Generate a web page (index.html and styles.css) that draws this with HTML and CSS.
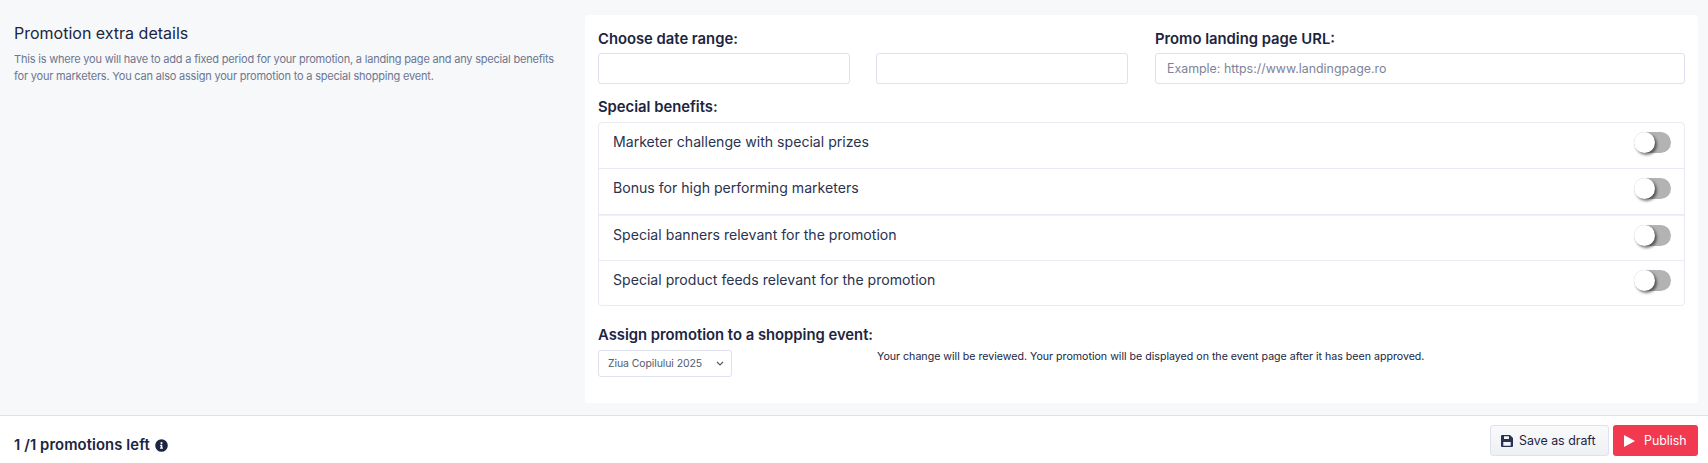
FILE: index.html
```html
<!DOCTYPE html>
<html lang="en">
<head>
<meta charset="utf-8">
<title>Promotion extra details</title>
<link rel="stylesheet" href="styles.css">
</head>
<body>
<main class="content">
  <section class="intro">
    <h2 class="intro-title">Promotion extra details</h2>
    <p class="intro-text">This is where you will have to add a fixed period for your promotion, a landing page and any special benefits for your marketers. You can also assign your promotion to a special shopping event.</p>
  </section>
  <section class="card">
    <div class="fields">
      <div class="field-date">
        <label class="label">Choose date range:</label>
        <div class="date-pair">
          <input class="input" type="text">
          <input class="input" type="text">
        </div>
      </div>
      <div class="field-url">
        <label class="label">Promo landing page URL:</label>
        <input class="input" type="text" placeholder="Example: https://www.landingpage.ro">
      </div>
    </div>
    <h3 class="label benefits-label">Special benefits:</h3>
    <ul class="benefits">
      <li class="benefit"><span class="benefit-text">Marketer challenge with special prizes</span><span class="toggle"></span></li>
      <li class="benefit"><span class="benefit-text">Bonus for high performing marketers</span><span class="toggle"></span></li>
      <li class="benefit benefit-thick"><span class="benefit-text">Special banners relevant for the promotion</span><span class="toggle"></span></li>
      <li class="benefit"><span class="benefit-text">Special product feeds relevant for the promotion</span><span class="toggle"></span></li>
    </ul>
    <h3 class="label event-label">Assign promotion to a shopping event:</h3>
    <div class="event-row">
      <select class="select"><option>Ziua Copilului 2025</option></select>
      <p class="event-note">Your change will be reviewed. Your promotion will be displayed on the event page after it has been approved.</p>
    </div>
  </section>
</main>
<footer class="footer">
  <div class="left-count">1 /1 promotions left
    <svg class="info" viewBox="0 0 512 512" width="13" height="13"><path fill="#1c2541" d="M256 8a248 248 0 1 0 0 496 248 248 0 0 0 0-496zm0 110a42 42 0 1 1 0 84 42 42 0 0 1 0-84zm56 254c0 7-5 12-12 12h-88c-7 0-12-5-12-12v-24c0-7 5-12 12-12h12v-64h-12c-7 0-12-5-12-12v-24c0-7 5-12 12-12h64c7 0 12 5 12 12v100h12c7 0 12 5 12 12z"/></svg>
  </div>
  <div class="actions">
    <button class="btn btn-draft" type="button">
      <svg viewBox="0 0 12 12" width="12" height="12"><path fill="#2a3350" fill-rule="evenodd" d="M1 0h8l3 3v8a1 1 0 0 1-1 1H1a1 1 0 0 1-1-1V1a1 1 0 0 1 1-1zM3 1.300v2.700h5V1.300zM2.300 7v3.700h7.400V7z"/></svg>
      Save as draft
    </button>
    <button class="btn btn-publish" type="button">
      <svg viewBox="0 0 11 12" width="11" height="12"><path fill="#fff" d="M0 0 L11 6 L0 12 Z"/></svg>
      Publish
    </button>
  </div>
</footer>
</body>
</html>
```
FILE: styles.css
```css
* { box-sizing: border-box; }
html, body { margin: 0; padding: 0; }
body {
  height: 463px;
  overflow: hidden;
  background: #f7f8fa;
  color: #1c2541;
  font-family: Inter, "Liberation Sans", sans-serif;
  display: flex;
  flex-direction: column;
}
.content {
  display: flex;
  height: 415px;
  padding: 15px 10px 12px 14px;
}
.intro { width: 571px; flex: none; padding-top: 8px; }
.intro-title { margin: 0; font-size: 16px; line-height: 20px; font-weight: 400; color: #1c2541; }
.intro-text { margin: 8px 0 0; font-size: 11px; letter-spacing: -0.2px; line-height: 16.5px; color: #6c7690; width: 555px; }
.card {
  flex: 1;
  background: #fff;
  border-radius: 3px;
  padding: 15px 13px 0;
}
.label { display: block; margin: 0; font-size: 14.8px; line-height: 18px; font-weight: 600; color: #1c2541; }
.fields { display: flex; gap: 27px; }
.field-date { width: 530px; flex: none; }
.field-url { flex: 1; }
.date-pair { display: grid; grid-template-columns: 1fr 1fr; gap: 26px; }
.input {
  display: block;
  width: 100%;
  height: 31px;
  margin-top: 5px;
  padding: 0 11px;
  border: 1px solid #dfe1ee;
  border-radius: 3px;
  background: #fff;
  font: 12.4px Inter, sans-serif;
  color: #1c2541;
}
.input::placeholder { color: #7d8496; opacity: 1; }
.benefits-label { margin-top: 14px; }
.benefits {
  list-style: none;
  margin: 6px 0 0;
  padding: 0;
  border: 1px solid #e9ebf3;
  border-radius: 4px;
}
.benefit {
  display: flex;
  align-items: center;
  justify-content: space-between;
  height: 46px;
  padding: 0 13px 6px 14px;
  font-size: 14.1px;
  color: #2a3350;
  border-bottom: 1px solid #e9ebf3;
}
.benefit-text { margin-bottom: 2px; }
.benefit-thick { border-top: 1px solid #eef0f5; }
.benefit:last-child { border-bottom: 0; height: 44px; padding-bottom: 5px; }
.toggle {
  position: relative;
  width: 37px;
  height: 21px;
  border-radius: 11px;
  background: #b3b3b3;
}
.toggle::before {
  content: "";
  position: absolute;
  left: 0;
  top: 0;
  width: 21px;
  height: 21px;
  border-radius: 50%;
  background: #fff;
  box-shadow: 2px 2px 3px rgba(0, 0, 0, .55);
}
.event-label { margin-top: 20px; }
.event-row { display: flex; margin-top: 6px; }
.select {
  appearance: none;
  width: 134px;
  height: 27px;
  padding: 0 4px 0 9px;
  border: 1px solid #dfe1ee;
  border-radius: 3px;
  background: #fff url("data:image/svg+xml,%3Csvg xmlns='http://www.w3.org/2000/svg' viewBox='0 0 8 5'%3E%3Cpath d='M1 1l3 3 3-3' fill='none' stroke='%23555b6b' stroke-width='1.2'/%3E%3C/svg%3E") no-repeat right 7px center / 8px 5px;
  font: 10.5px Inter, sans-serif;
  letter-spacing: -0.1px;
  color: #555b6b;
}
.event-note { margin: -1px 0 0 145px; font-size: 10.63px; line-height: 15px; color: #1c2541; }
.footer {
  flex: 1;
  display: flex;
  align-items: center;
  justify-content: space-between;
  padding: 2px 10px 0 14px;
  background: #fff;
  border-top: 1px solid #dfe1ea;
}
.left-count { display: flex; align-items: center; gap: 5px; margin-top: 9px; font-size: 14.8px; letter-spacing: .1px; font-weight: 600; color: #1c2541; }
.actions { display: flex; gap: 4px; }
.btn {
  display: flex;
  align-items: center;
  height: 31px;
  border-radius: 3px;
  font: 12.4px Inter, sans-serif;
  white-space: nowrap;
  cursor: pointer;
}
.btn-draft {
  width: 119px;
  gap: 6px;
  padding: 0 10px;
  border: 1px solid #dfe1ee;
  background: linear-gradient(#f9fafb, #eef0f4);
  color: #1c2541;
}
.btn-publish {
  width: 85px;
  gap: 9px;
  padding: 0 11px;
  border: 0;
  background: #f1394f;
  color: #fff;
}
```
